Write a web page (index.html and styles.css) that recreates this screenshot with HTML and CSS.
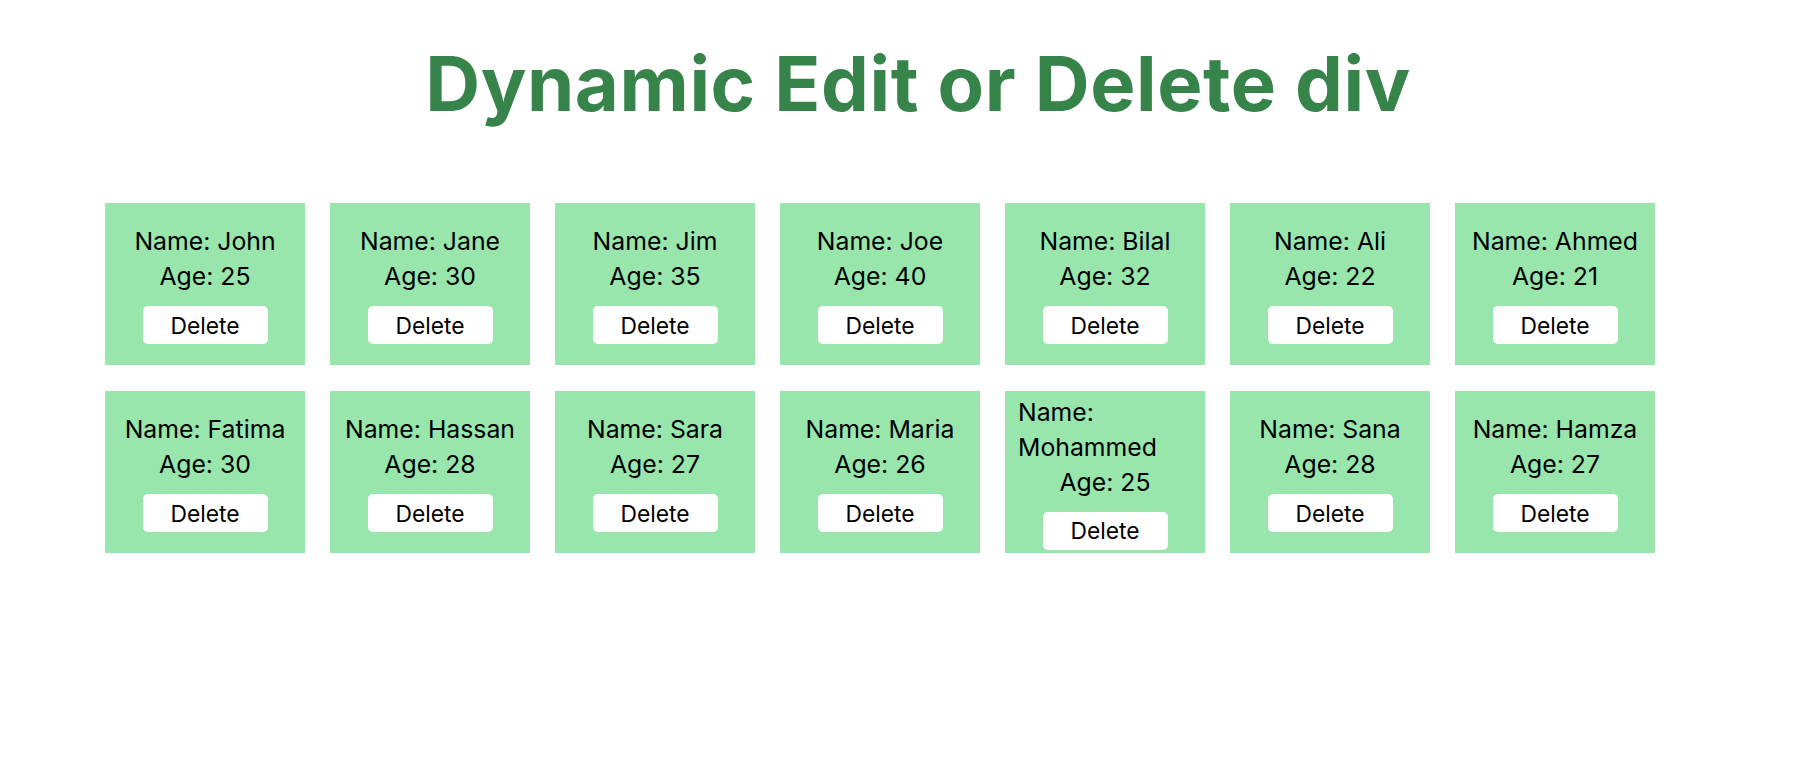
FILE: index.html
```html
<!DOCTYPE html>
<html>
<head>
<meta charset="utf-8">
<link rel="stylesheet" href="styles.css">
</head>
<body>
<h1 class="title">Dynamic Edit or Delete div</h1>
<div class="grid">
  <div class="card"><p class="line">Name: John</p><p class="line">Age: 25</p><button class="del">Delete</button></div>
  <div class="card"><p class="line">Name: Jane</p><p class="line">Age: 30</p><button class="del">Delete</button></div>
  <div class="card"><p class="line">Name: Jim</p><p class="line">Age: 35</p><button class="del">Delete</button></div>
  <div class="card"><p class="line">Name: Joe</p><p class="line">Age: 40</p><button class="del">Delete</button></div>
  <div class="card"><p class="line">Name: Bilal</p><p class="line">Age: 32</p><button class="del">Delete</button></div>
  <div class="card"><p class="line">Name: Ali</p><p class="line">Age: 22</p><button class="del">Delete</button></div>
  <div class="card"><p class="line">Name: Ahmed</p><p class="line">Age: 21</p><button class="del">Delete</button></div>
  <div class="card"><p class="line">Name: Fatima</p><p class="line">Age: 30</p><button class="del">Delete</button></div>
  <div class="card"><p class="line">Name: Hassan</p><p class="line">Age: 28</p><button class="del">Delete</button></div>
  <div class="card"><p class="line">Name: Sara</p><p class="line">Age: 27</p><button class="del">Delete</button></div>
  <div class="card"><p class="line">Name: Maria</p><p class="line">Age: 26</p><button class="del">Delete</button></div>
  <div class="card"><p class="line">Name: Mohammed</p><p class="line">Age: 25</p><button class="del">Delete</button></div>
  <div class="card"><p class="line">Name: Sana</p><p class="line">Age: 28</p><button class="del">Delete</button></div>
  <div class="card"><p class="line">Name: Hamza</p><p class="line">Age: 27</p><button class="del">Delete</button></div>
</div>
</body>
</html>
```
FILE: styles.css
```css
html, body {
  margin: 0;
  padding: 0;
  background: #ffffff;
}
body {
  font-family: "Inter", "Open Sans", sans-serif;
  color: #000;
}
.title {
  margin: 0;
  padding: 38px 0 0 35px;
  height: 166px;
  box-sizing: border-box;
  text-align: center;
  font-size: 76px;
  line-height: 90px;
  font-weight: 700;
  letter-spacing: 0.55px;
  color: #36844a;
  white-space: nowrap;
}
.grid {
  display: grid;
  grid-template-columns: repeat(7, 200px);
  grid-auto-rows: 162px;
  gap: 26px 25px;
  padding: 37px 0 0 105px;
}
.card {
  background: #98e6ac;
  display: flex;
  flex-direction: column;
  align-items: center;
  justify-content: center;
  padding: 0 13px;
}
.line {
  margin: 0;
  font-size: 24.8px;
  line-height: 35px;
}
.del {
  margin-top: 12px;
  width: 125px;
  height: 38px;
  border: none;
  border-radius: 5px;
  background: #fff;
  color: #000;
  font-family: inherit;
  font-size: 22.8px;
  padding: 0;
  flex-shrink: 0;
}
```
